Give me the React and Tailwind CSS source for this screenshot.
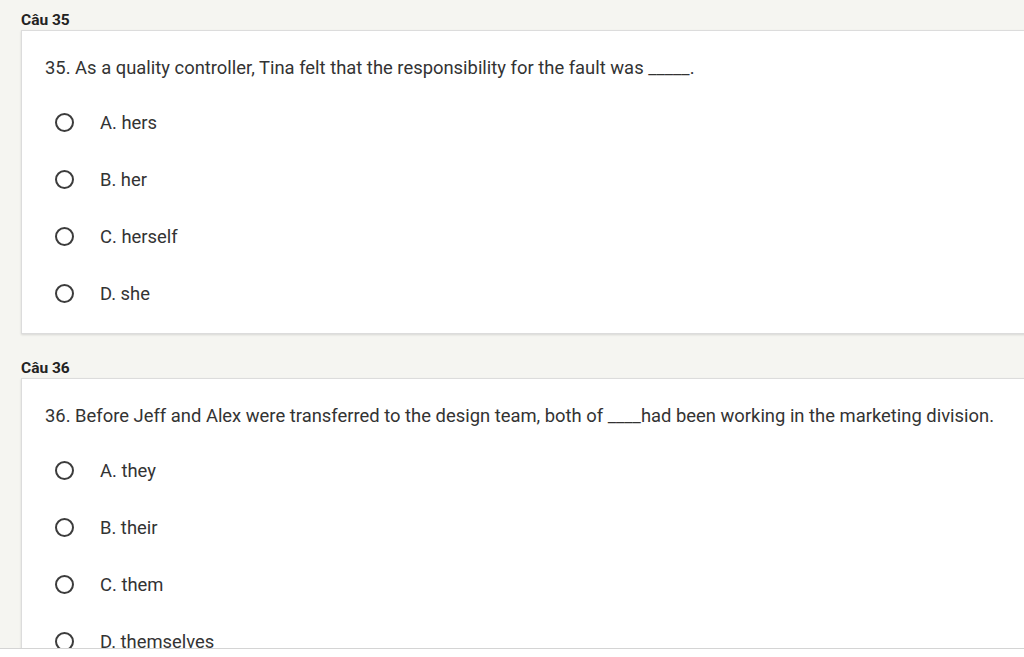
import React from "react";

const questions = [
  {
    label: "Câu 35",
    text: "35. As a quality controller, Tina felt that the responsibility for the fault was _____.",
    options: ["A. hers", "B. her", "C. herself", "D. she"],
  },
  {
    label: "Câu 36",
    text: "36. Before Jeff and Alex were transferred to the design team, both of ____had been working in the marketing division.",
    options: ["A. they", "B. their", "C. them", "D. themselves"],
  },
];

const Option = ({ text }) => (
  <div className="h-[57px] flex items-center">
    <span className="ml-[33px] w-[19px] h-[19px] rounded-full border-2 border-[#3c3c3c] box-border"></span>
    <span className="ml-[26px] text-[18.4px] text-[#333]">{text}</span>
  </div>
);

const Question = ({ q, first }) => (
  <div>
    <div className={`${first ? "pt-[11px]" : "pt-[25px]"} pl-[21px] text-[15.5px] font-bold text-[#222] leading-[18px] pb-[1px]`}>
      {q.label}
    </div>
    <div className="ml-[21px] w-[1020px] bg-white border border-[#dcdcdc] shadow-[0_1px_2px_rgba(0,0,0,0.12)] pt-[25px] pb-[11px]">
      <div className="pl-[23px] text-[18.4px] leading-[24px] text-[#333] whitespace-nowrap">{q.text}</div>
      <div className="mt-[14px]">
        {q.options.map((o) => (
          <Option key={o} text={o} />
        ))}
      </div>
    </div>
  </div>
);

export default function App() {
  return (
    <div className="w-[1024px] h-[657px] bg-white overflow-hidden font-['Roboto',sans-serif]">
      <div className="h-[649px] overflow-hidden bg-[#f5f5f1] border-b border-[#d4d4d4]">
        {questions.map((q, i) => (
          <Question key={q.label} q={q} first={i === 0} />
        ))}
      </div>
    </div>
  );
}
